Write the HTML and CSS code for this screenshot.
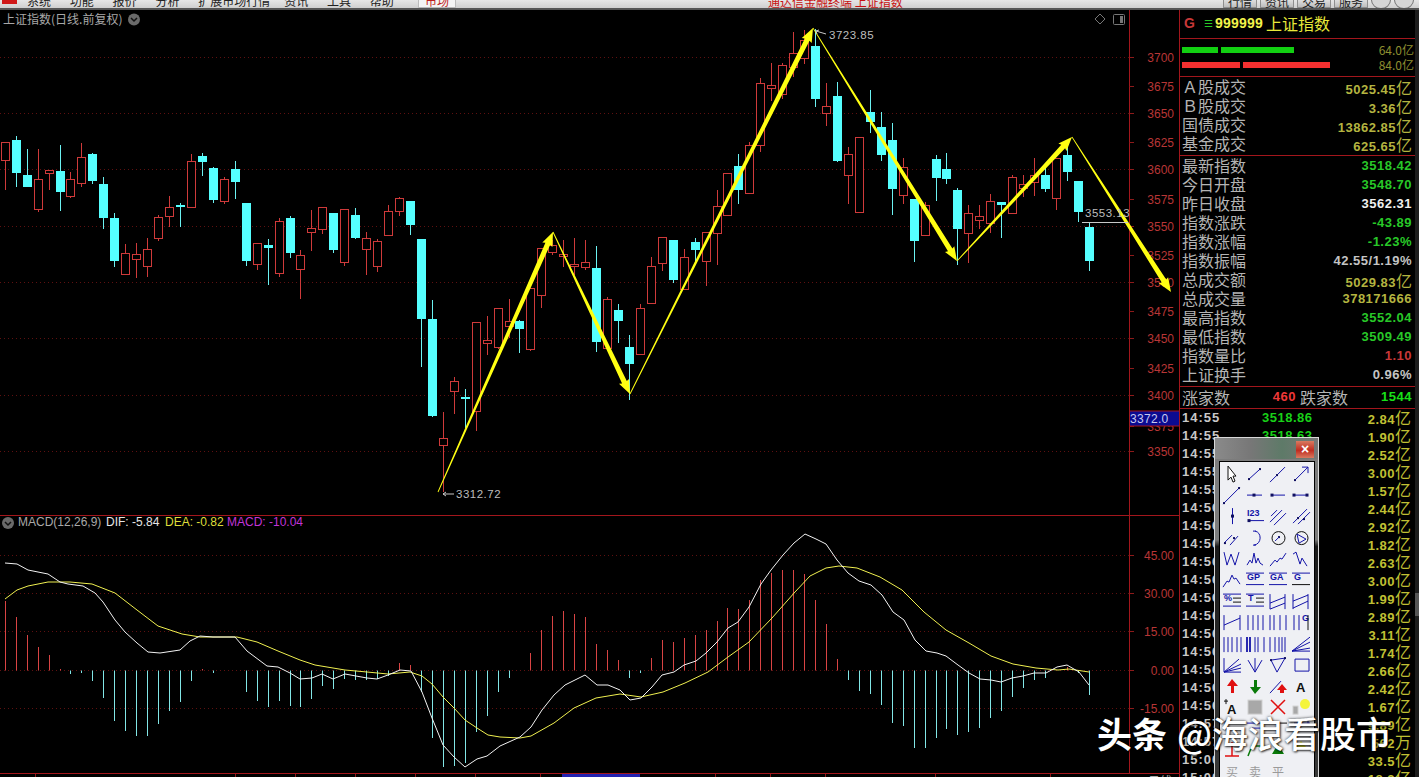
FILE: index.html
```html
<!DOCTYPE html>
<html lang="zh-CN">
<head>
<meta charset="utf-8">
<title>上证指数</title>
<link rel="stylesheet" href="styles.css">
<script src="script.js" defer></script>
</head>
<body>
<div class="app">
  <div class="topbar">
    <span class="logo"></span>
    <nav class="menu">
      <span class="m1">系统</span><span class="m1">功能</span><span class="m1">报价</span><span class="m1">分析</span><span class="m2">扩展市场行情</span><span class="m1">资讯</span><span class="m1">工具</span><span class="m1">帮助</span>
    </nav>
    <span class="tab">市场</span>
    <span class="title">通达信金融终端 上证指数</span>
    <div class="topbtns">
      <span class="tbtn">行情</span><span class="tbtn">资讯</span><span class="tbtn">交易</span><span class="tbtn">服务</span>
      <span class="rbtn"></span><span class="rbtn"></span>
    </div>
  </div>

  <div class="main">
    <svg id="chart" class="chart" viewBox="0 10 1180 767" width="1180" height="767">
      <g id="grid"></g>
      <g id="candles"></g>
      <g id="macd"></g>
      <g id="arrows"></g>
      <text class="t-title" x="3" y="24">上证指数(日线.前复权)</text>
      <circle class="pill" cx="134" cy="19.5" r="6"/><path class="chev" d="M131 18l3 3 3-3"/>
      <path class="t-icon" d="M1100 14l5 5-5 5-5-5z"/>
      <rect class="t-icon" x="1113.5" y="14.5" width="11" height="10" rx="1"/><rect class="t-fill" x="1120" y="16" width="3" height="7"/>
      <text class="t-mark" x="456" y="498">3312.72</text>
      <path class="t-line" d="M443 494h11M443 494l3-2M443 494l3 2"/>
      <text class="t-mark" x="829" y="39">3723.85</text>
      <path class="t-line" d="M816 31l10 3M816 31l3-1M816 31l1 3"/>
      <text class="t-mark" x="1085" y="217">3553.13</text>
      <path class="t-line" d="M1082 222.500H1128"/>
      <circle class="pill" cx="8" cy="523" r="6"/><path class="chev" d="M5 522l3 3 3-3"/>
      <text class="t-mac c-gray" x="18" y="526">MACD(12,26,9)</text>
      <text class="t-mac c-white" x="106" y="526">DIF: -5.84</text>
      <text class="t-mac c-yellow" x="165" y="526">DEA: -0.82</text>
      <text class="t-mac c-purple" x="227" y="526">MACD: -10.04</text>
      <rect class="date" x="562" y="774" width="78" height="4"/>
      <text class="t-axis" x="1148" y="786">日线</text>
      <rect class="cur" x="1129.500" y="411" width="50" height="15"/>
      <text class="t-cur" x="1130" y="423">3372.0</text>
    </svg>

    <aside class="panel">
      <header class="qhead">
        <span class="qg">G</span><span class="qm">☰</span><span class="qc">999999</span><span class="qn">上证指数</span>
      </header>
      <section class="flow">
        <div class="flow-row"><i class="seg g s1"></i><i class="seg g s2"></i><span class="flow-v">64.0亿</span></div>
        <div class="flow-row"><i class="seg r s3"></i><i class="seg r s4"></i><span class="flow-v">84.0亿</span></div>
      </section>
      <section class="stats s-a">
        <div class="row"><span>Ａ股成交</span><b class="olive">5025.45<em>亿</em></b></div>
        <div class="row"><span>Ｂ股成交</span><b class="olive">3.36<em>亿</em></b></div>
        <div class="row"><span>国债成交</span><b class="olive">13862.85<em>亿</em></b></div>
        <div class="row"><span>基金成交</span><b class="olive">625.65<em>亿</em></b></div>
      </section>
      <section class="stats s-b">
        <div class="row"><span>最新指数</span><b class="green">3518.42</b></div>
        <div class="row"><span>今日开盘</span><b class="green">3548.70</b></div>
        <div class="row"><span>昨日收盘</span><b class="white">3562.31</b></div>
        <div class="row"><span>指数涨跌</span><b class="green">-43.89</b></div>
        <div class="row"><span>指数涨幅</span><b class="green">-1.23%</b></div>
        <div class="row"><span>指数振幅</span><b class="gray">42.55/1.19%</b></div>
        <div class="row"><span>总成交额</span><b class="olive">5029.83<em>亿</em></b></div>
        <div class="row"><span>总成交量</span><b class="olive">378171666</b></div>
        <div class="row"><span>最高指数</span><b class="green">3552.04</b></div>
        <div class="row"><span>最低指数</span><b class="green">3509.49</b></div>
        <div class="row"><span>指数量比</span><b class="red">1.10</b></div>
        <div class="row"><span>上证换手</span><b class="gray">0.96%</b></div>
      </section>
      <section class="counts">
        <span class="cl">涨家数</span><b class="cv up">460</b><span class="cl cl2">跌家数</span><b class="cv dn">1544</b>
      </section>
      <section id="ticks" class="ticks"></section>
    </aside>
    <div class="edge"></div>
  </div>

  <div class="palette">
    <div class="pal-title"><span class="pal-close">×</span></div>
    <div class="pal-body" id="pal"></div>
  </div>

  <div class="watermark"><b>头条</b><span>@海浪看股市</span></div>
</div>
</body>
</html>
```
FILE: styles.css
```css
* { box-sizing: border-box; }
html, body { margin: 0; padding: 0; background: #000; overflow: hidden; }
.app { position: relative; width: 1419px; height: 777px; overflow: hidden; font-family: "Noto Sans CJK SC", "Liberation Sans", sans-serif; }

.topbar { height: 10px; display: flex; align-items: flex-end; background: linear-gradient(#e6e6e6, #cfcfcf); border-bottom: 2px solid #555; overflow: hidden; font-size: 12px; color: #222; line-height: 14px; }
.logo { width: 15px; height: 4px; margin: 0 0 4px 2px; background: #d01818; align-self: flex-start; }
.menu { display: flex; margin-left: 10px; height: 8px; align-items: flex-end; }
.menu span { display: block; height: 14px; flex: none; margin-bottom: 0; }
.m1 { width: 42.800px; }
.m2 { width: 86px; }
.tab { flex: none; width: 38px; height: 10px; margin-left: 5.400px; background: #f4f4f4; border: 1px solid #bbb; color: #c02020; display: flex; align-items: flex-end; justify-content: center; line-height: 12px; }
.title { flex: none; margin-left: 312px; color: #c81010; font-size: 12px; line-height: 12px; height: 8px; display: flex; align-items: flex-end; }
.topbtns { margin-left: auto; display: flex; gap: 3px; margin-right: 5px; height: 8px; align-items: flex-end; }
.tbtn { width: 34px; height: 9px; background: linear-gradient(#dedede, #bdbdbd); border: 1px solid #8e8e8e; text-align: center; font-size: 12px; line-height: 11px; display: flex; align-items: flex-end; justify-content: center; }
.rbtn { width: 20px; height: 18px; margin-bottom: -1px; border-radius: 50%; background: #d6d6d6; border: 1px solid #777; }

.main { display: flex; height: 767px; }
.chart { display: block; flex: none; background: #000; font-family: "Liberation Sans", sans-serif; }
.panel { width: 235px; flex: none; background: #000; color: #b4b4b4; font-size: 16px; }
.edge { width: 4px; flex: none; background: linear-gradient(#1d1d1d 0 76%, #555 76% 79%, #1d1d1d 79%); }

.dot { stroke: #5e1010; stroke-width: 1; stroke-dasharray: 1 3; fill: none; }
.rline { stroke: #a3161c; stroke-width: 1; fill: none; }
.tick { stroke: #8d1a1a; stroke-width: 1; }
.lab { fill: #b83636; font-size: 12px; text-anchor: end; font-family: "Liberation Sans", sans-serif; }
.wr { stroke: #cf3a3a; stroke-width: 1; fill: none; }
.br { stroke: #cf3a3a; stroke-width: 1; fill: #000; }
.wc { stroke: #6cf2f2; stroke-width: 1; fill: none; }
.bc { fill: #55ffff; }
.hr { stroke: #d84444; stroke-width: 1; }
.hc { stroke: #82e6e6; stroke-width: 1; }
.dif { stroke: #f2f2f2; stroke-width: 1; fill: none; }
.dea { stroke: #f0f050; stroke-width: 1; fill: none; }
.arrow { fill: #ffff12; }

.t-title { fill: #a8a8a8; font-size: 12px; font-family: "Noto Sans CJK SC", sans-serif; }
.t-mark { fill: #bdbdbd; font-size: 11.500px; letter-spacing: .5px; }
.t-line { stroke: #c8c8c8; stroke-width: 1; fill: none; }
.t-icon { stroke: #777; stroke-width: 1; fill: none; }
.t-fill { fill: #777; }
.pill { fill: #6a6a6a; }
.chev { stroke: #111; stroke-width: 1.500; fill: none; }
.t-mac { font-size: 12px; }
.c-gray { fill: #a8a8a8; }
.c-white { fill: #e6e6e6; }
.c-yellow { fill: #dede3a; }
.c-purple { fill: #c034d8; }
.date { fill: #2222b0; }
.t-axis { fill: #aaa; font-size: 12px; font-family: "Noto Sans CJK SC", sans-serif; }
.cur { fill: #0b0b90; stroke: #a3161c; }
.t-cur { fill: #c8c8ee; font-size: 12px; letter-spacing: .3px; }

.qhead { height: 29px; border-bottom: 1px solid #a3161c; display: flex; align-items: center; padding: 0 0 3px 4px; }
.qg { color: #c83838; font: bold 14px "Liberation Sans", sans-serif; width: 20px; }
.qm { color: #28c828; font-size: 10px; width: 11px; }
.qc { color: #f2f24a; font: bold 14px "Liberation Sans", sans-serif; letter-spacing: .2px; margin-right: 3px; }
.qn { color: #e8e83a; font-size: 16px; }

.flow { height: 38px; border-bottom: 1px solid #a3161c; padding: 7.500px 1px 0 2px; display: flex; flex-direction: column; gap: 9px; }
.flow-row { position: relative; height: 6px; display: flex; gap: 3px; }
.seg { display: block; height: 6px; }
.g { background: #12d012; }
.r { background: #f43030; }
.s1 { width: 36px; }
.s2 { width: 73px; }
.s3 { width: 58px; }
.s4 { width: 87px; }
.flow-v { position: absolute; right: 0; top: -5px; font-size: 12px; line-height: 15px; color: #8e8e30; }

.stats { border-bottom: 1px solid #a3161c; padding: 0 3px 0 2px; }
.s-a { height: 79px; }
.s-b { height: 231px; }
.row { height: 19px; display: flex; justify-content: space-between; align-items: center; line-height: 19px; }
.row b, .ticks b { font: bold 13px "Liberation Sans", sans-serif; letter-spacing: .5px; }
em { font-style: normal; font-weight: 400; font-family: "Noto Sans CJK SC", sans-serif; font-size: 16px; letter-spacing: 0; }
.olive { color: #b4b440; }
.green { color: #28c828; }
.white { color: #f0f0f0; }
.gray { color: #c4c4c4; }
.red { color: #c83838; }

.counts { height: 22px; border-bottom: 1px solid #a3161c; display: flex; align-items: center; padding: 0 3px 2px 2px; }
.cl { width: 48px; flex: none; }
.cv { font: bold 13px "Liberation Sans", sans-serif; letter-spacing: .5px; text-align: right; flex: none; }
.up { color: #f03838; width: 66px; }
.dn { color: #18e018; flex: 1; }
.cl2 { margin-left: 4px; }

.ticks { padding: 0 4px 0 2px; margin-top: -1px; }
.tk { height: 18px; display: flex; align-items: center; line-height: 18px; }
.tk .tm { width: 80px; color: #c8c8c8; flex: none; letter-spacing: 1px; }
.tk .pr { width: 60px; color: #18d018; flex: none; }
.tk .vo { margin-left: auto; color: #c0c034; }

.palette { position: absolute; left: 1214px; top: 437px; width: 105px; height: 340px; background: linear-gradient(#7c7c7c 0 30%, #1a1a1a 32%, #3a3a3a 100%); border: 1px solid #d8d8d8; border-bottom: 0; padding: 3px 3px 0 4px; overflow: hidden; }
.pal-title { height: 21px; display: flex; justify-content: flex-end; background: linear-gradient(90deg, #8a8a8a, #777 35%, #5e7a68 65%, #777); margin: -3px -3px 0 -4px; padding: 3px 4px 0 0; }
.pal-close { width: 18px; height: 17px; background: linear-gradient(#d87a60, #c02c20 55%, #d87a60); color: #fff; font: bold 14px/16px "Liberation Sans", sans-serif; text-align: center; }
.pal-body { display: grid; grid-template-columns: repeat(4, 23px); grid-auto-rows: 21.200px; justify-content: center; background: #eff0f4; border: 1px solid #000; padding-top: 2px; height: 340px; margin-top: 2px; }
.ic { width: 23px; height: 21.200px; display: block; font-family: "Liberation Sans", sans-serif; }
.ic .b { stroke: #1414a8; fill: none; stroke-width: 1; }
.ic .bb { stroke: #1414a8; fill: none; stroke-width: 1.800; }
.ic .bk { stroke: #101010; fill: none; stroke-width: 1; }
.ic .d { fill: #101060; }
.ic .tb { fill: #1414a8; font-size: 9px; font-weight: 700; }
.ic .tk2 { fill: #101010; font-size: 13px; font-weight: 700; }
.ic .cur { stroke: #101010; fill: #fff; }
.ic .rf { fill: #e01010; }
.ic .gf { fill: #0a7a0a; }
.ic .rs { stroke: #e01010; stroke-width: 1.500; fill: none; }
.ic .gs { stroke: #0a7a0a; stroke-width: 1.500; fill: none; }
.ic .gy { fill: #a8a8a8; stroke: #d0d0d0; }
.ic .yf { fill: #f4f43c; }
.ic .tg { fill: #9a9a9a; font-size: 12px; font-family: "Noto Sans CJK SC", sans-serif; }

.watermark { position: absolute; left: 1097px; top: 708px; display: flex; align-items: center; gap: 10px; color: #fff; height: 48px; text-shadow: 0 0 3px rgba(0,0,0,.75), 1px 1px 2px rgba(0,0,0,.7); white-space: nowrap; }
.watermark b { font-size: 35px; font-weight: 700; }
.watermark span { font-size: 36px; font-weight: 500; }
```
FILE: script.js
```js
const NS = "http://www.w3.org/2000/svg";
function el(parent, tag, attrs, text) {
  const n = document.createElementNS(NS, tag);
  for (const k in attrs) n.setAttribute(k, attrs[k]);
  if (text !== undefined) n.textContent = text;
  parent.appendChild(n);
  return n;
}
const X = i => Math.round(5.3 + 10.95 * i - 0.5) + 0.5;

/* [high, bodyTop, bodyBottom, low, colour] */
const K = [
[142,142,160,190,'r'],[136,140,173,187,'c'],[149,175,187,187,'c'],[149,179,209,212,'r'],[170,170,173,190,'r'],
[145,171,192,211,'c'],[172,179,196,198,'r'],[143,157,183,187,'r'],[153,154,181,184,'c'],[177,184,218,229,'c'],
[213,218,261,267,'c'],[244,253,274,274,'r'],[243,254,259,278,'r'],[238,249,266,277,'r'],[215,217,238,241,'r'],
[196,207,216,227,'r'],[203,205,207,227,'c'],[154,161,207,208,'r'],[153,156,162,176,'c'],[167,168,200,203,'c'],
[177,179,201,204,'r'],[161,169,182,199,'c'],[203,203,261,266,'c'],[243,243,264,270,'r'],[239,245,248,285,'c'],
[218,221,273,277,'r'],[216,218,253,258,'c'],[250,255,269,299,'r'],[210,228,232,251,'r'],[207,207,229,234,'r'],
[213,213,250,253,'c'],[209,209,262,266,'r'],[208,215,238,239,'c'],[232,238,249,275,'r'],[239,241,266,272,'r'],
[205,211,235,235,'r'],[197,198,211,216,'r'],[201,201,225,235,'c'],[239,239,319,367,'c'],[300,319,416,417,'c'],
[412,438,445,492,'r'],[377,381,391,414,'r'],[389,397,398,428,'c'],[322,322,411,431,'r'],[316,340,343,355,'r'],
[308,308,347,349,'r'],[299,321,326,338,'r'],[320,321,329,353,'c'],[288,288,349,351,'r'],[248,248,295,308,'r'],
[240,245,252,255,'r'],[240,254,256,267,'r'],[238,264,266,275,'r'],[240,262,267,270,'r'],[246,268,342,352,'c'],
[297,299,348,348,'r'],[304,310,321,343,'c'],[335,347,364,400,'c'],[304,308,354,354,'r'],[257,266,303,303,'r'],
[237,237,263,271,'r'],[240,240,280,283,'c'],[249,257,289,289,'r'],[238,242,250,263,'c'],[232,232,261,286,'r'],
[190,206,233,265,'r'],[173,173,215,215,'r'],[154,166,190,204,'c'],[142,145,193,193,'r'],[78,83,145,152,'r'],
[63,85,88,101,'r'],[63,65,94,99,'r'],[32,53,67,77,'r'],[30,40,58,64,'r'],[29,46,99,107,'c'],
[83,106,113,126,'r'],[82,96,161,162,'c'],[147,154,175,204,'r'],[137,137,212,213,'r'],[90,112,122,133,'c'],
[112,127,155,161,'c'],[123,140,189,215,'c'],[158,167,195,204,'r'],[199,199,241,262,'c'],[202,205,235,235,'r'],
[155,159,178,201,'c'],[153,169,179,184,'c'],[188,190,229,265,'c'],[205,213,233,263,'r'],[205,216,220,229,'r'],
[194,201,223,233,'r'],[202,202,205,238,'c'],[175,177,213,213,'r'],[175,184,188,197,'r'],[158,175,182,196,'r'],
[165,175,189,192,'c'],[158,158,198,210,'r'],[140,155,172,181,'c'],[181,181,212,222,'c'],[222,227,261,271,'c']
];

const HIST = [601,617,635,647,655,669,674,673,681,698,721,731,736,736,724,711,702,681,669,673,671,671,692,701,707,701,706,707,699,686,689,679,680,680,679,676,663,665,692,738,767,766,763,732,716,692,
678,671,653,630,616,611,614,617,644,650,660,678,673,658,640,642,638,635,630,621,608,609,600,580,573,570,570,574,600,624,659,680,691,694,705,723,726,748,748,738,729,735,732,728,718,711,697,688,680,678,671,667,673,695];

const DIF = "5,563 17,564 28,570 48,574 60,582 68,584 83,586 95,593 103,602 115,620 125,632 137,643 148,652 160,653 180,650 190,641 200,636 213,637 235,637 247,651 267,666 278,667 290,673 300,679 312,678 322,674 333,679 345,674 367,678 377,679 388,675 400,670 411,671 422,692 432,718 443,745 454,757 465,767 477,759 487,756 500,746 520,737 531,727 542,710 554,695 565,685 585,675 597,685 608,685 620,690 630,700 641,698 652,687 662,675 674,672 684,665 696,661 706,653 717,642 728,628 738,622 749,607 761,584 771,570 783,555 794,543 805,534 816,539 826,544 837,560 848,573 859,581 871,585 882,595 893,612 904,620 915,640 926,651 937,653 946,656 958,665 969,673 980,679 991,680 1001,682 1012,678 1023,676 1034,673 1046,673 1057,667 1067,665 1079,672 1089,685";
const DEA = "5,599 17,590 28,586 48,582 70,582 92,584 115,593 137,610 158,626 182,634 200,637 237,637 257,642 278,651 300,660 315,665 345,670 367,672 388,674 410,672 422,676 432,684 443,697 454,708 465,720 477,728 488,735 500,737 520,738 531,736 554,723 574,708 596,698 620,694 641,697 663,692 685,683 708,672 728,657 749,642 772,618 795,592 810,576 826,568 839,566 857,568 880,577 902,590 924,612 946,630 969,643 991,656 1013,664 1036,668 1058,670 1069,669 1089,672";

function drawGrid() {
  const g = document.getElementById("grid");
  [57.5,113.5,169.5,226.5,282.5,338.5,395.5,451.5].forEach(y => el(g,"path",{class:"dot",d:`M0 ${y}H1129`}));
  [555.5,593.5,631.5,670.5,708.5].forEach(y => el(g,"path",{class:"dot",d:`M0 ${y}H1129`}));
  el(g,"path",{class:"rline",d:"M0 515.5H1180M0 773.5H1180M1129.5 10V774M1179.5 10V777"});
  const price = [[3700,57],[3675,86],[3650,113],[3625,142],[3600,169],[3575,199],[3550,226],[3525,255],[3500,282],[3475,311],[3450,338],[3425,368],[3400,395],[3375,426],[3350,451]];
  price.forEach(([t,y]) => {
    el(g,"path",{class:"tick",d:`M1129 ${y+.5}h5`});
    el(g,"text",{class:"lab",x:1174,y:y+5},t);
  });
  const mac = [["45.00",555],["30.00",593],["15.00",631],["0.00",670],["-15.00",708]];
  mac.forEach(([t,y]) => {
    el(g,"path",{class:"tick",d:`M1129 ${y+.5}h5`});
    el(g,"text",{class:"lab",x:1174,y:y+5},t);
  });
  [35,235,295,355,415,475,540,620,715,770,825,935,1050].forEach(x => el(g,"path",{class:"tick",d:`M${x+.5} 774v3`}));
}

function drawCandles() {
  const g = document.getElementById("candles");
  K.forEach((k,i) => {
    const x = X(i), [hi,top,bot,lo,c] = k;
    if (c === 'r') {
      if (hi < top) el(g,"path",{class:"wr",d:`M${x} ${hi}V${top}`});
      if (lo > bot) el(g,"path",{class:"wr",d:`M${x} ${bot}V${lo}`});
      el(g,"rect",{class:"br",x:x-4,y:top+.5,width:8,height:Math.max(bot-top,1)});
    } else {
      el(g,"path",{class:"wc",d:`M${x} ${hi}V${lo}`});
      el(g,"rect",{class:"bc",x:x-4.5,y:top,width:9,height:Math.max(bot-top,2)});
    }
  });
}

function drawMacd() {
  const g = document.getElementById("macd");
  HIST.forEach((y,i) => {
    if (Math.abs(y-670.5) < 1) return;
    el(g,"path",{class:y<670.5?"hr":"hc",d:`M${X(i)} 670.5V${y}`});
  });
  el(g,"polyline",{class:"dea",points:DEA});
  el(g,"polyline",{class:"dif",points:DIF});
}

function arrow(g,x1,y1,x2,y2) {
  const dx=x2-x1, dy=y2-y1, L=Math.hypot(dx,dy), ux=dx/L, uy=dy/L, nx=-uy, ny=ux;
  const P=(a,w)=>`${(x1+ux*a+nx*w).toFixed(1)},${(y1+uy*a+ny*w).toFixed(1)}`;
  const h=L-13;
  el(g,"polygon",{class:"arrow",points:[P(0,.4),P(h,2.6),P(h-1,5.5),P(L,0),P(h-1,-5.5),P(h,-2.6),P(0,-.4)].join(" ")});
}
function drawArrows() {
  const g = document.getElementById("arrows");
  [[438,492,553,232],[553,232,630,394],[630,394,813,28],[813,28,957,261],[957,261,1072,137],[1072,137,1171,292]]
    .forEach(a => arrow(g,...a));
}

function drawTicks() {
  const rows = [
   ["14:55","3518.86","2.84","亿"],["14:55","3518.63","1.90","亿"],["14:55","","2.52","亿"],["14:55","","3.00","亿"],["14:55","","1.57","亿"],
   ["14:56","","2.44","亿"],["14:56","","2.92","亿"],["14:56","","1.82","亿"],["14:56","","2.63","亿"],["14:56","","3.00","亿"],
   ["14:56","","1.99","亿"],["14:56","","2.89","亿"],["14:56","","3.11","亿"],["14:56","","1.74","亿"],["14:56","","2.66","亿"],
   ["14:56","","2.42","亿"],["14:56","","1.67","亿"],["14:57","","9.89","亿"],["14:57","","562","万"],["15:00","","33.5","亿"],["15:00","","18.2","亿"]
  ];
  const box = document.getElementById("ticks");
  box.innerHTML = rows.map(r=>`<div class="tk"><b class="tm">${r[0]}</b><b class="pr">${r[1]}</b><b class="vo">${r[2]}<em>${r[3]}</em></b></div>`).join("");
}

function drawPalette() {
  const d=(x,y,s=3)=>`<rect class="d" x="${x-s/2}" y="${y-s/2}" width="${s}" height="${s}"/>`;
  const b=p=>`<path class="b" d="${p}"/>`;
  const bb=p=>`<path class="bb" d="${p}"/>`;
  const bk=p=>`<path class="bk" d="${p}"/>`;
  const tb=(x,y,t)=>`<text class="tb" x="${x}" y="${y}">${t}</text>`;
  const lines=l=>b(l.map(x=>`M${x} 3V18`).join(""));
  const icons=[
   `<path class="cur" d="M7 2V16L10 13L12 18L14 17L12 12H15Z"/>`, b("M5 15L16 5")+d(5,15,2)+d(16,5,2), b("M3 18L18 3")+d(10,11,2), b("M5 16L18 3M12 3H18V9")+d(5,16,2),
   b("M2 19L19 2")+d(3,18,2)+d(18,3,2), b("M3 10H18")+d(10,10), b("M4 10H18")+d(5,10), b("M3 10H18")+d(4,10)+d(17,10),
   b("M11.5 2V18")+d(11.5,10), tb(3,10,"I23")+b("M5 14.5H20")+d(5,14.5), b("M3 16L15 4M7 19L19 7M4 10L10 4"), b("M3 17L17 3M8 18L20 6")+d(8,12,2)+d(14,13,2),
   b("M3 15L11 7M9 17L17 8")+d(4,15,2)+d(13,10,2), b("M11 3C18 4 18 16 10 17M9 3H12M9 17H12"), `<circle class="bk" cx="11.500" cy="10" r="6.500"/>`+d(12,9,2)+b("M8 13L12 9"), `<circle class="bk" cx="11.500" cy="10" r="6.500"/>`+b("M7 6L16 11L9 15Z"),
   b("M3 3L6 16L10 5L14 16L18 3"), b("M3 16L6 11L8 14L10 4L12 14L14 9L16 14L19 16"), b("M3 17L8 11L10 13L13 9L15 10L19 4"), b("M3 5L6 3L10 15L12 9L17 17"),
   b("M2 17L6 11L8 12L11 5L13 9L15 8L19 14"), tb(3,10,"GP")+b("M2 3H20M2 14.500H20"), tb(3,10,"GA")+b("M2 3H20M2 14.500H20"), tb(4,10,"G")+b("M2 3H20")+`<path class="bk" d="M2 14.500H20"/>`,
   tb(3,10,"%")+b("M2 3H20M2 15H20")+`<path class="bk" d="M12 7H20M12 11H20"/>`, tb(4,10,"T")+b("M2 3H20M2 15H20")+`<path class="bk" d="M12 7H20M12 11H20"/>`, b("M3 3V18M18 3V18M3 12L18 6M3 18L18 12"), b("M3 3V18M18 3V18M3 10L18 4M3 17L18 10"),
   b("M3 3V18M19 3V18M3 13L19 6"), lines([4,9,14,19]), lines([3,7,13,19]), lines([4,9])+tb(12,9,"G")+`<path class="bk" d="M18 3V18"/>`,
   lines([3,7,11,16,20]), bb("M3 3V18M6 3V18")+lines([11,14,20]), b("M3 3V18")+lines([8,12,15,18]), b("M2 17L20 3M2 17L20 8M2 17L20 14M2 17H20"),
   b("M3 3V17H20M3 17L18 4M3 17L20 9M3 17L20 13"), b("M4 5L11 17L18 5M11 3V17"), b("M4 5L18 3L10 17Z")+d(4,5,2)+d(18,3,2), b("M5 4H19V16H5Z"),
   `<path class="rf" d="M11 3L17 10H13V17H10V10H6Z"/>`, `<path class="gf" d="M11 18L17 11H13V4H10V11H6Z"/>`, b("M3 17L14 5")+`<path class="rf" d="M15 8L20 14H17V17H13V14H10Z"/>`, `<text class="tk2" x="6" y="16">A</text>`,
   `<text class="tk2" x="6" y="17">A</text><path class="bk" d="M5 2V7M3 4H7"/>`, `<rect class="gy" x="4" y="3" width="14" height="14"/>`, `<path class="rs" d="M4 3L18 17M18 3L4 17"/>`, `<circle class="yf" cx="15" cy="7" r="5"/><rect class="gy" x="3" y="9" width="5" height="8"/>`,
   bk("M4 3V8M4 3H8"), b("M3 5H20M8 10H20"), bk("M4 5H20"), b("M4 5H20M18 2V8"),
   `<path class="rs" d="M4 17H18M11 3V17"/>`, `<path class="gs" d="M4 17L8 7H18"/>`, `<path class="gf" d="M11 5L17 15H5Z"/>`, `<path class="yf" d="M11 2L16 8H6Z"/>`,
   `<text class="tg" x="5" y="16">买</text>`, `<text class="tg" x="5" y="16">卖</text>`, `<text class="tg" x="5" y="16">平</text>`, ``
  ];
  document.getElementById("pal").innerHTML = icons.map(s=>`<svg class="ic" viewBox="0 0 23 21">${s}</svg>`).join("");
}

drawGrid(); drawCandles(); drawMacd(); drawArrows(); drawTicks(); drawPalette();
```
